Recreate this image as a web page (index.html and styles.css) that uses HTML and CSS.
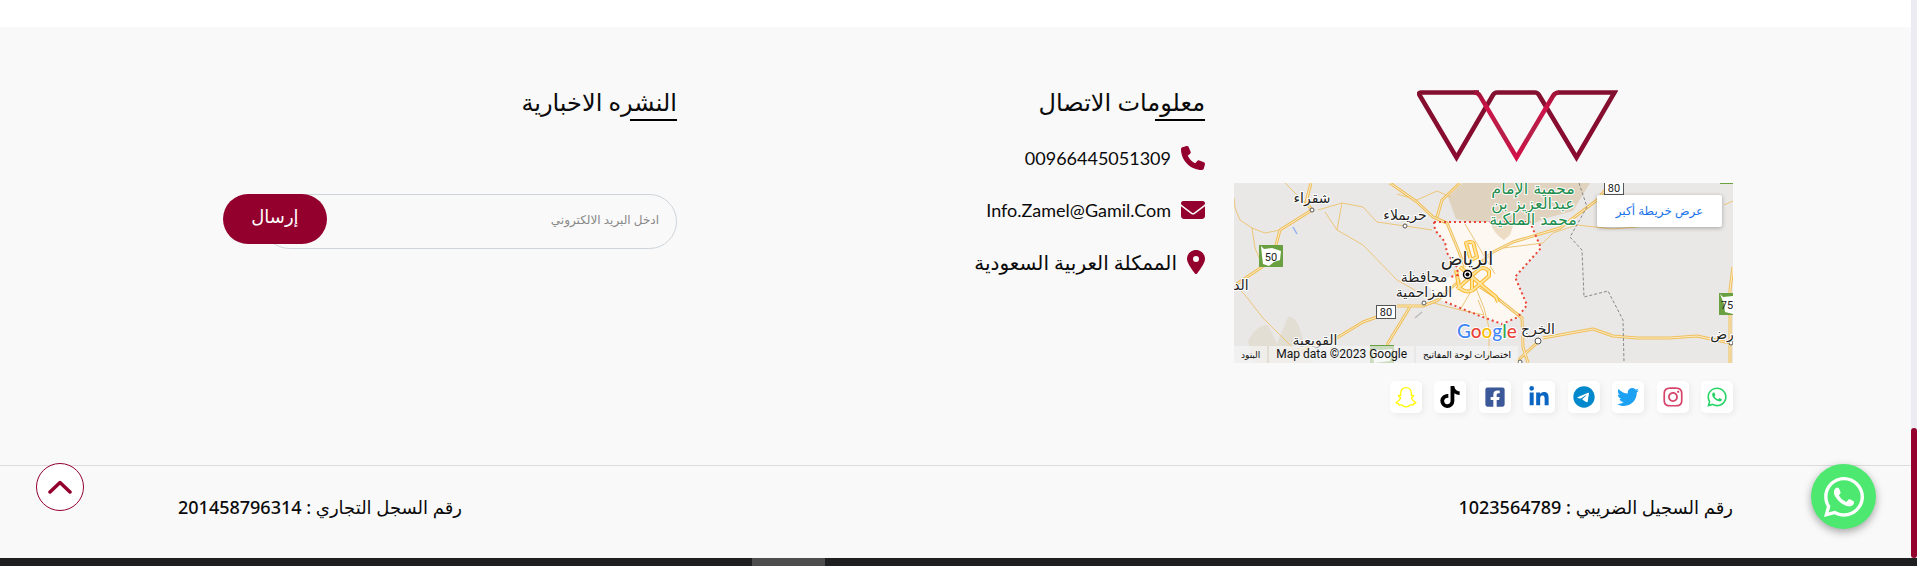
FILE: index.html
```html
<!DOCTYPE html>
<html lang="ar" dir="rtl">
<head>
<meta charset="utf-8">
<title>Zamel</title>
<link rel="stylesheet" href="styles.css">
</head>
<body>
<div class="page">
  <footer class="footer">
    <div class="footer-grid">
      <section class="about">
        <a class="logo" href="#" aria-label="Zamel">
          <svg viewBox="0 0 201 72" width="201" height="72" fill="none" stroke-width="4.5">
            <defs>
              <linearGradient id="dark" x1="0" y1="0" x2="0" y2="1"><stop offset="0" stop-color="#84102f"/><stop offset="1" stop-color="#8a0a30"/></linearGradient>
              <linearGradient id="light" x1="0" y1="0" x2="0" y2="1"><stop offset="0" stop-color="#a01238"/><stop offset=".25" stop-color="#d01248"/><stop offset=".6" stop-color="#b52148"/><stop offset="1" stop-color="#d40f48"/></linearGradient>
            </defs>
            <path stroke="url(#dark)" d="M62 2.500H4q-3 0-1.500 2.500L39.500 67.500 76 5q1.500-2.500 4-2.500h38q2.500 0 4 2.500l37.500 62.500L197.500 2.500H141"/>
            <path stroke="url(#light)" d="M57 2.500q4 0 6 3.500l36.500 61.500L136 6q2-3.500 6-3.500"/>
          </svg>
        </a>
        <div class="map">
          <svg class="map-art" viewBox="0 0 499 180" preserveAspectRatio="xMidYMid slice" role="img" aria-label="خريطة الرياض">
            <rect width="499" height="180" fill="#e9e8e7"/>
            <path fill="#dfd7c8" d="M14 158q8-16 20-16l10 20v18H20zM44 158l10-24q10-1 14 20l10 26H44z" opacity=".6"/>
            <path fill="#dfd2be" d="M229 0 214 14l8 22 24 4 53 1 10-5 30-8 17-28z"/>
            <path fill="#fdf8f2" d="M200 39h96l11 26-26 29 12 28-9 12-16 7-22-8-37-15-16-16 23-8 8-2-1-8-10-14-2-11-10-12z"/>
            <path fill="#ecdcc4" d="M256 40h24l-4 12-6 5q-9-5-14-17z"/>
            <path stroke="#8fb0f0" stroke-width="1.500" d="M59 44l4 7"/>
            <path stroke="#bbb" stroke-width="1.500" d="M181 135l7-6"/>
            <g class="road-thin">
              <path d="M0 15l1 10 5 12 12 8 13 5 15-3M18 45l3 20 5 12M51 0l20 20M84 27l24-7 21 4 14 15 28 4 27 4M108 20l-5 27M91 29l12 18 26 15 34 35 30 17M163 11l20 6 20-9 14 6M1 102l10 10 18 23 27 27 7 10M196 119l30 8 10-17M269 65l40-5 10-10 24-8 36 4 24-2 8-2M490 22l9-4M231 41l12 20 18 30M242 105l8 20 5 20v35M226 127l24 5-6-15"/>
            </g>
            <g class="road-edge">
              <path d="M77 0l-5 19 6 8-32 20-4 15-14 22L1 102M156 0l27 19 16 15 14 6 10 24 8 20M226 0l-18 17-5 17M63 167l33-8 33-20 14-5M163 123h26l15-6 22-20M176 124l-22 36-4 20M246 80l13-11 20-10 47-14 37-28 14-17M246 104l17 11 25 20 1 29 5 16M309 155l50-9 20 7 24 2h33l27-2 33 7M304 159l-22 20M499 84l-3 23v73"/>
            </g>
            <g class="road-core">
              <path d="M77 0l-5 19 6 8-32 20-4 15-14 22L1 102M156 0l27 19 16 15 14 6 10 24 8 20M226 0l-18 17-5 17M63 167l33-8 33-20 14-5M163 123h26l15-6 22-20M176 124l-22 36-4 20M246 80l13-11 20-10 47-14 37-28 14-17M246 104l17 11 25 20 1 29 5 16M309 155l50-9 20 7 24 2h33l27-2 33 7M304 159l-22 20M499 84l-3 23v73"/>
            </g>
            <g class="ring-edge"><path d="M232 60q8-3 8 3l3 11-6 3zM222 87l3 17q6 7 14 3l16-14V88q-6-6-12 0l-20 18M226 84l36 30 2 5M238 90v18"/></g>
            <g class="ring-core"><path d="M232 60q8-3 8 3l3 11-6 3zM222 87l3 17q6 7 14 3l16-14V88q-6-6-12 0l-20 18M226 84l36 30 2 5M238 90v18"/></g>
            <path class="border-city" d="M200 39h96l11 26-26 29 12 28-9 12-16 7-22-8-37-15"/>
            <path class="border-city" d="M200 39l1 8 10 12 2 11 10 14 1 8-8 2"/>
            <path class="border-region" d="M345 0l8 24-17 30 12 13 2 47 24-6 15 29 1 43"/>
            <g>
              <rect x="25" y="62" width="24" height="22" fill="#6a9f42"/><path fill="#fff" d="M27 63l3 3 8-1 9 3-1 9-6 2-5 4-6-2-1-8z"/>
              <rect x="485" y="110" width="24" height="22" fill="#6a9f42"/><path fill="#fff" d="M486 111l3 3 10-1v18l-8-2-1-8z"/>
              <rect x="136" y="162" width="24" height="18" fill="#6a9f42"/><path fill="#fff" d="M138 166l9 1 11-1-2 12-16 2z"/>
              <rect x="486" y="-2" width="14" height="3" fill="#6a9f42"/>
              <rect class="shield" x="142.500" y="122.500" width="19" height="13"/>
              <rect class="shield" x="370.500" y="-2.500" width="19" height="14"/>
            </g>
            <g class="shield-text"><text x="37" y="78">50</text><text x="493" y="126">75</text><text x="152" y="133">80</text><text x="380" y="9">80</text></g>
            <g class="town">
              <circle cx="78" cy="27" r="2"/><circle cx="171" cy="43" r="2"/><circle cx="190" cy="120" r="2"/><circle cx="304" cy="158" r="3"/><circle cx="497" cy="160" r="2"/><circle cx="286" cy="179" r="2"/>
            </g>
            <g class="place">
              <text x="78" y="20">شقراء</text><text x="171" y="37">حريملاء</text><text x="190" y="99">محافظة</text><text x="190" y="114">المزاحمية</text><text x="81" y="162">القويعية</text><text x="7" y="107">الد</text><text x="304" y="151">الخرج</text><text x="488" y="156">رض</text>
            </g>
            <g class="place park"><text x="299" y="11">محمية الإمام</text><text x="299" y="26">عبدالعزيز بن</text><text x="299" y="42">محمد الملكية</text></g>
            <text class="place capital" x="233" y="82">الرياض</text>
            <circle cx="233.500" cy="91.500" r="4" fill="#fff" stroke="#000" stroke-width="1.500"/><circle cx="233.500" cy="91.500" r="2" fill="#000"/>
            <text class="google" x="223" y="155"><tspan fill="#4285f4">G</tspan><tspan fill="#ea4335">o</tspan><tspan fill="#fbbc05">o</tspan><tspan fill="#4285f4">g</tspan><tspan fill="#34a853">l</tspan><tspan fill="#ea4335">e</tspan></text>
          </svg>
          <a class="map-open" href="#">عرض خريطة أكبر</a>
          <div class="map-legal"><button type="button">اختصارات لوحة المفاتيح</button><span dir="ltr">Map data ©2023 Google</span><a href="#">البنود</a></div>
        </div>
        <nav class="social" aria-label="وسائل التواصل">
          <a class="whatsapp" href="#" aria-label="WhatsApp"><svg viewBox="0 0 448 512"><path id="wa" d="M380.900 97.100C339 55.100 283.200 32 223.900 32c-122.400 0-222 99.600-222 222 0 39.100 10.200 77.300 29.600 111L0 480l117.700-30.900c32.400 17.700 68.900 27 106.100 27h.1c122.300 0 224.100-99.600 224.100-222 0-59.300-25.200-115-67.100-157zm-157 341.600c-33.200 0-65.700-8.900-94-25.700l-6.700-4-69.800 18.300L72 359.200l-4.400-7c-18.500-29.400-28.200-63.300-28.200-98.200 0-101.700 82.800-184.500 184.600-184.500 49.300 0 95.600 19.200 130.400 54.100 34.800 34.900 56.200 81.200 56.100 130.500 0 101.800-84.900 184.600-186.600 184.600zm101.200-138.200c-5.500-2.800-32.800-16.200-37.900-18-5.100-1.900-8.800-2.800-12.500 2.800-3.700 5.600-14.300 18-17.600 21.800-3.200 3.700-6.500 4.200-12 1.400-32.600-16.300-54-29.100-75.500-66-5.700-9.800 5.700-9.100 16.300-30.300 1.800-3.700.9-6.900-.5-9.700-1.400-2.800-12.500-30.100-17.100-41.200-4.500-10.800-9.100-9.300-12.500-9.500-3.200-.2-6.900-.2-10.600-.2-3.700 0-9.700 1.400-14.800 6.900-5.100 5.600-19.400 19-19.400 46.300 0 27.300 19.900 53.700 22.600 57.400 2.800 3.700 39.100 59.700 94.800 83.800 35.200 15.200 49 16.500 66.600 13.900 10.700-1.600 32.800-13.400 37.400-26.400 4.600-13 4.600-24.100 3.200-26.400-1.300-2.500-5-3.900-10.500-6.600z"/></svg></a>
          <a class="instagram" href="#" aria-label="Instagram"><svg viewBox="0 0 448 512"><path d="M224.100 141c-63.600 0-114.900 51.300-114.900 114.900s51.300 114.900 114.900 114.900S339 319.500 339 255.900 287.700 141 224.100 141zm0 189.600c-41.100 0-74.700-33.500-74.700-74.700s33.500-74.700 74.700-74.700 74.700 33.500 74.700 74.700-33.600 74.700-74.700 74.700zm146.400-194.300c0 14.900-12 26.800-26.800 26.800-14.900 0-26.800-12-26.800-26.800s12-26.800 26.800-26.800 26.800 12 26.800 26.800zm76.100 27.200c-1.700-35.900-9.900-67.700-36.200-93.900-26.200-26.200-58-34.400-93.900-36.200-37-2.100-147.900-2.100-184.900 0-35.800 1.700-67.600 9.900-93.900 36.100s-34.400 58-36.200 93.900c-2.100 37-2.100 147.900 0 184.900 1.700 35.900 9.900 67.700 36.200 93.900s58 34.400 93.900 36.200c37 2.100 147.900 2.100 184.900 0 35.900-1.700 67.700-9.900 93.900-36.200 26.200-26.200 34.400-58 36.200-93.900 2.100-37 2.100-147.800 0-184.800zM398.800 388c-7.800 19.600-22.900 34.700-42.600 42.600-29.500 11.700-99.500 9-132.100 9s-102.700 2.600-132.100-9c-19.600-7.800-34.700-22.900-42.600-42.600-11.700-29.500-9-99.500-9-132.100s-2.600-102.700 9-132.100c7.800-19.600 22.900-34.700 42.600-42.600 29.500-11.700 99.500-9 132.100-9s102.700-2.600 132.100 9c19.600 7.800 34.700 22.900 42.600 42.600 11.700 29.500 9 99.500 9 132.100s2.700 102.700-9 132.100z"/></svg></a>
          <a class="twitter" href="#" aria-label="Twitter"><svg viewBox="0 0 512 512"><path d="M459.370 151.716c.325 4.548.325 9.097.325 13.645 0 138.720-105.583 298.558-298.558 298.558-59.452 0-114.680-17.219-161.137-47.106 8.447.974 16.568 1.299 25.340 1.299 49.055 0 94.213-16.568 130.274-44.832-46.132-.975-84.792-31.188-98.112-72.772 6.498.974 12.995 1.624 19.818 1.624 9.421 0 18.843-1.300 27.614-3.573-48.081-9.747-84.143-51.980-84.143-102.985v-1.299c13.969 7.797 30.214 12.670 47.431 13.319-28.264-18.843-46.781-51.005-46.781-87.391 0-19.492 5.197-37.360 14.294-52.954 51.655 63.675 129.300 105.258 216.365 109.807-1.624-7.797-2.599-15.918-2.599-24.040 0-57.828 46.782-104.934 104.934-104.934 30.213 0 57.502 12.670 76.670 33.137 23.715-4.548 46.456-13.320 66.599-25.340-7.798 24.366-24.366 44.833-46.132 57.827 21.117-2.273 41.584-8.122 60.426-16.243-14.292 20.791-32.161 39.308-52.628 54.253z"/></svg></a>
          <a class="telegram" href="#" aria-label="Telegram"><svg viewBox="0 0 496 512"><path d="M248 8C111.033 8 0 119.033 0 256s111.033 248 248 248 248-111.033 248-248S384.967 8 248 8zm114.952 168.660c-3.732 39.215-19.881 134.378-28.100 178.300-3.476 18.584-10.322 24.816-16.948 25.425-14.400 1.326-25.338-9.517-39.287-18.661-21.827-14.308-34.158-23.215-55.346-37.177-24.485-16.135-8.612-25 5.342-39.500 3.652-3.793 67.107-61.510 68.335-66.746.153-.655.3-3.100-1.154-4.384s-3.590-.849-5.135-.5q-3.283.746-104.608 69.142-14.845 10.194-26.894 9.934c-8.855-.191-25.888-5.006-38.551-9.123-15.531-5.048-27.875-7.717-26.800-16.291q.84-6.700 18.450-13.700 108.446-47.248 144.628-62.300c68.872-28.647 83.183-33.623 92.511-33.789 2.052-.034 6.639.474 9.610 2.885a10.452 10.452 0 0 1 3.530 6.716 43.765 43.765 0 0 1 .417 9.769z"/></svg></a>
          <a class="linkedin" href="#" aria-label="LinkedIn"><svg viewBox="0 0 448 512"><path d="M100.280 448H7.400V148.900h92.880zM53.790 108.100C24.090 108.100 0 83.500 0 53.800a53.790 53.790 0 0 1 107.580 0c0 29.700-24.100 54.300-53.790 54.300zM447.900 448h-92.680V302.400c0-34.700-.7-79.200-48.290-79.200-48.290 0-55.690 37.700-55.690 76.700V448h-92.780V148.900h89.080v40.800h1.300c12.400-23.500 42.690-48.300 87.880-48.300 94 0 111.280 61.900 111.280 142.300V448z"/></svg></a>
          <a class="facebook" href="#" aria-label="Facebook"><svg viewBox="0 0 448 512"><path d="M400 32H48A48 48 0 0 0 0 80v352a48 48 0 0 0 48 48h137.250V327.690h-63V256h63v-54.640c0-62.150 37-96.480 93.670-96.480 27.140 0 55.520 4.840 55.520 4.840v61h-31.270c-30.810 0-40.420 19.120-40.420 38.730V256h68.780l-11 71.690h-57.780V480H400a48 48 0 0 0 48-48V80a48 48 0 0 0-48-48z"/></svg></a>
          <a class="tiktok" href="#" aria-label="TikTok"><svg viewBox="0 0 448 512"><path d="M448 209.910a210.060 210.060 0 0 1-122.770-39.250V349.380A162.550 162.550 0 1 1 185 188.310V278.200a74.620 74.620 0 1 0 52.230 71.180V0h88a121.180 121.180 0 0 0 1.860 22.170A122.180 122.180 0 0 0 381 102.390a121.430 121.430 0 0 0 67 20.140z"/></svg></a>
          <a class="snapchat" href="#" aria-label="Snapchat"><svg viewBox="0 0 22 22"><path d="M11 1.700c-3.300 0-5.300 2.300-5.300 5.200v2.500c-.7.300-1.400-.2-1.900 0-.8.500-.1 1.200.7 1.500.8.400 1.300.7.900 1.600-.8 1.700-2 3-3.700 3.500-.9.300-.7.900 0 1.200.7.300 1.600.3 1.800.7.200.5.100 1 .6 1.100.8.100 1.700-.3 2.800.2 1.300.6 2.200 1.700 4.100 1.700s2.800-1.100 4.100-1.700c1.100-.5 2-.1 2.800-.2.500-.1.400-.6.600-1.100.2-.4 1.100-.4 1.800-.7.700-.3.900-.9 0-1.200-1.700-.5-2.900-1.800-3.700-3.500-.4-.9.100-1.200.9-1.600.8-.3 1.500-1 .7-1.500-.5-.2-1.200.3-1.900 0V6.900c0-2.900-2-5.200-5.300-5.200z"/></svg></a>
        </nav>
      </section>

      <section class="contact">
        <h2 class="title">معلومات الاتصال</h2>
        <ul class="contact-list">
          <li><a href="tel:00966445051309"><svg width="24" height="24" viewBox="0 0 512 512"><path d="M164.900 24.600c-7.700-18.600-28-28.500-47.400-23.200l-88 24C12.100 30.200 0 46 0 64c0 247.400 200.600 448 448 448 18 0 33.800-12.100 38.600-29.500l24-88c5.300-19.400-4.600-39.700-23.200-47.400l-96-40c-16.300-6.800-35.200-2.100-46.300 11.600L304.700 368C234.300 334.700 177.300 277.700 144 207.300L193.300 167c13.700-11.200 18.400-30 11.600-46.300l-40-96z"/></svg><span>00966445051309</span></a></li>
          <li><a href="mailto:Info.Zamel@Gamil.Com"><svg width="24" height="24" viewBox="0 0 512 512"><path d="M48 64C21.500 64 0 85.500 0 112c0 15.100 7.100 29.300 19.200 38.400L236.800 313.600c11.400 8.500 27 8.500 38.400 0L492.800 150.400c12.100-9.100 19.200-23.300 19.200-38.400 0-26.500-21.500-48-48-48H48zM0 176v208c0 35.300 28.700 64 64 64h384c35.300 0 64-28.700 64-64V176L294.400 339.200c-22.800 17.100-54 17.100-76.800 0L0 176z"/></svg><span>Info.Zamel@Gamil.Com</span></a></li>
          <li><a class="address" href="#"><svg width="18" height="24" viewBox="0 0 384 512"><path d="M215.700 499.200C267 435 384 279.400 384 192 384 86 298 0 192 0S0 86 0 192c0 87.400 117 243 168.300 307.200 12.300 15.300 35.100 15.300 47.400 0zM192 128a64 64 0 1 1 0 128 64 64 0 1 1 0-128z"/></svg><span>الممكلة العربية السعودية</span></a></li>
        </ul>
      </section>

      <section class="news">
        <h2 class="title">النشره الاخبارية</h2>
        <form class="subscribe">
          <input type="email" aria-label="البريد الالكتروني" placeholder="ادخل البريد الالكتروني">
          <button type="button">إرسال</button>
        </form>
      </section>
    </div>
    <div class="legal">
      <p>رقم السجيل الضريبي : 1023564789</p>
      <p>رقم السجل التجاري : 201458796314</p>
    </div>
  </footer>
  <div class="taskbar"><span></span></div>
</div>
<div class="scrollbar"><span class="thumb"></span></div>
<a class="to-top" href="#" aria-label="إلى الأعلى"><svg width="24" height="14" viewBox="0 0 24 14"><path d="M2 12 12 2.500 22 12"/></svg></a>
<a class="chat" href="#" aria-label="WhatsApp"><svg width="40" height="46" viewBox="0 0 448 512"><use href="#wa"/></svg></a>
</body>
</html>
```
FILE: styles.css
```css
* { box-sizing: border-box; margin: 0; padding: 0; }
body {
  display: flex;
  min-height: 100vh;
  direction: rtl;
  background: #fff;
  color: #0a0a0a;
  font-family: "Noto Sans", "DejaVu Sans", sans-serif;
  font-size: 18px;
}
a { color: inherit; text-decoration: none; }
button { border: 0; font: inherit; cursor: pointer; }
ul { list-style: none; }

.page { order: 2; flex: 1; display: flex; flex-direction: column; padding-top: 27px; }
.footer { flex: 1; background: #f9f9f9; }
.footer-grid {
  display: grid;
  grid-template-columns: repeat(3, 1fr);
  column-gap: 29px;
  padding: 63px 178px 52px;
}

.logo { display: block; margin-inline-start: 115px; margin-bottom: 21px; line-height: 0; }
.map { position: relative; height: 180px; overflow: hidden; }
.map-art { display: block; width: 100%; height: 100%; font-family: "DejaVu Sans", sans-serif; }
.road-thin, .road-edge, .road-core, .ring-edge, .ring-core { fill: none; stroke-linejoin: round; }
.road-thin { stroke: #edc679; stroke-width: 1; }
.road-edge { stroke: #efbf5c; stroke-width: 3; }
.road-core { stroke: #fbecc8; stroke-width: 1; }
.ring-edge { stroke: #fbb62b; stroke-width: 4; }
.ring-core { stroke: #ffe49c; stroke-width: 2; }
.border-city { fill: none; stroke: #ea4335; stroke-width: 2; stroke-dasharray: 2 3; }
.border-region { fill: none; stroke: #888; stroke-width: 1; stroke-dasharray: 3 2; }
.shield { fill: #fff; stroke: #555; }
.shield-text { font: 11px Roboto, sans-serif; fill: #222; text-anchor: middle; direction: ltr; }
.town circle { fill: #fff; stroke: #555; stroke-width: 1; }
.place { font-size: 14px; fill: #222; text-anchor: middle; stroke: #fff; stroke-width: 2; paint-order: stroke; direction: rtl; }
.park { font-size: 16px; fill: #1e8e4e; }
.capital { font-size: 18px; }
.google { font: 500 19px Lato, sans-serif; direction: ltr; stroke: #fff; stroke-width: 2; paint-order: stroke; }
.map-open {
  position: absolute;
  top: 12px;
  right: 11px;
  width: 125px;
  background: #fff;
  border-radius: 2px;
  box-shadow: 0 1px 4px rgba(0, 0, 0, .3);
  color: #1a73e8;
  font-size: 12px;
  line-height: 32px;
  text-align: center;
}
.map-legal {
  position: absolute;
  bottom: 0;
  left: 0;
  display: flex;
  gap: 2px;
  font-size: 9px;
  line-height: 17px;
  color: #111;
}
.map-legal > * { padding: 0 7px; background: rgba(245, 245, 245, .7); }
.map-legal span { font: 12px/17px Roboto, sans-serif; }

.social { display: flex; justify-content: space-between; width: 343px; margin-top: 18px; }
.social a {
  display: grid;
  place-items: center;
  width: 32px;
  height: 32px;
  border-radius: 5px;
  background: #fff;
  box-shadow: 2px 2px 6px rgba(0, 0, 0, .06);
}
.social svg { width: 22px; height: 22px; fill: currentColor; }
.whatsapp { color: #25d366; }
.instagram { color: #d6456b; }
.twitter { color: #1da1f2; }
.telegram { color: #0088cc; }
.linkedin { color: #0a66c2; }
.facebook { color: #3b5998; }
.tiktok { color: #000; }
.snapchat { color: #fffc00; }
.social .snapchat svg { fill: none; stroke: currentColor; stroke-width: 1.3; }

.title {
  position: relative;
  width: fit-content;
  font-size: 24px;
  font-weight: 500;
  line-height: 24px;
}
.title::after {
  content: "";
  position: absolute;
  top: 29px;
  inset-inline-start: 0;
  width: 30%;
  height: 2px;
  background: #000;
}
.contact-list { display: grid; gap: 24px; margin-top: 30px; font-family: Lato, "DejaVu Sans", sans-serif; }
.contact-list a { display: flex; align-items: center; gap: 10px; width: fit-content; line-height: 28px; }
.contact-list .address { font-size: 20px; }
.contact-list svg { fill: #93002e; }

.subscribe { position: relative; width: 91%; margin-top: 80px; padding-inline-end: 39px; }
.subscribe input {
  display: block;
  width: 100%;
  height: 55px;
  padding: 0 17px 4px;
  border: 1px solid #ced4da;
  border-radius: 28px;
  background: transparent;
  font: 12px "Noto Sans", "DejaVu Sans", sans-serif;
}
.subscribe input::placeholder { color: #888; }
.subscribe button {
  position: absolute;
  top: 0;
  left: 0;
  width: 104px;
  height: 50px;
  padding-bottom: 6px;
  border-radius: 25px;
  background: #93002e;
  color: #fff;
  font-weight: 500;
}

.legal {
  display: flex;
  justify-content: space-between;
  padding: 27px 178px 36px;
  border-top: 1px solid #dcdcdc;
  font-weight: 500;
  line-height: 28px;
}

.taskbar { height: 8px; background: #1e1f20; direction: ltr; }
.taskbar span { display: block; width: 73px; height: 100%; margin-left: 752px; background: #4d4d4d; }
.scrollbar { order: 1; display: flex; width: 6px; padding-bottom: 8px; background: linear-gradient(#ebebf1 0 0) top / 100% calc(100% - 8px) no-repeat #1e1f20; }
.thumb { align-self: flex-end; width: 100%; height: 130px; border-radius: 4px; background: #93002e; }

.to-top, .chat { position: fixed; display: grid; place-items: center; border-radius: 50%; }
.to-top { left: 36px; bottom: 55px; width: 48px; height: 48px; border: 1px solid #93002e; background: #fff; }
.to-top svg { fill: none; stroke: #93002e; stroke-width: 3.5; stroke-linecap: round; stroke-linejoin: round; }
.chat { right: 41px; bottom: 37px; width: 65px; height: 65px; background: #4de870; box-shadow: 0 3px 8px rgba(0, 0, 0, .35); }
.chat svg { fill: #fff; }
```
